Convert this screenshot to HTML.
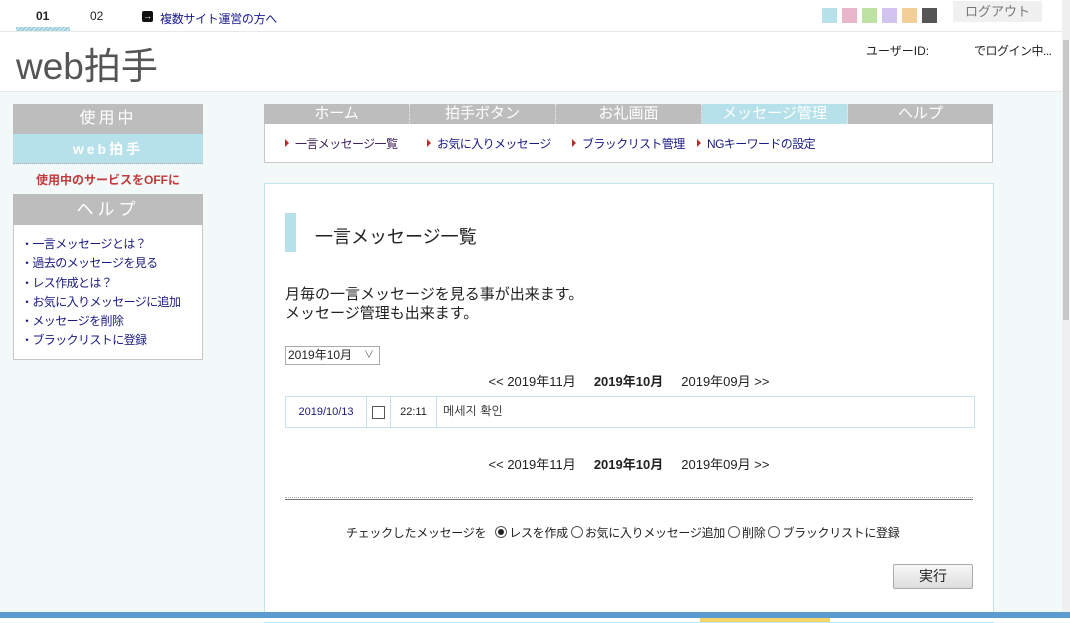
<!DOCTYPE html>
<html><head><meta charset="utf-8"><style>
*{margin:0;padding:0;box-sizing:border-box}
body{width:1070px;height:622px;overflow:hidden;background:#f3f8f8;font-family:"Liberation Sans","Noto Sans CJK JP",sans-serif;font-size:12px;color:#222;position:relative}
.a{position:absolute}
.top{left:0;top:0;width:1062px;height:32px;background:#fff;border-bottom:1px solid #e6eaea}
.head{left:0;top:32px;width:1062px;height:60px;background:#fff;border-bottom:1px solid #e3ecec}
.sq{top:8px;width:15px;height:15px}
.side{left:13px;width:190px}
.gh{background:#bdbdbd;color:#fff;text-align:center}
.nav{left:264px;top:104px;width:729px;height:20px;background:#bdbdbd;display:flex}
.nav div{flex:1;color:#fff;text-align:center;font-size:15px;line-height:20px;border-right:1px dotted #eee}
.sub{left:264px;top:124px;width:729px;height:39px;background:#fff;border:1px solid #c8c8c8;border-top:none}
.sub span{position:absolute;top:11px;font-size:12px;color:#1a1a80;letter-spacing:-0.6px;white-space:nowrap}
.sub span:before{content:"";display:inline-block;border-left:4px solid #b03030;border-top:4px solid transparent;border-bottom:4px solid transparent;margin-right:6px;vertical-align:1px}
.main{left:264px;top:183px;width:730px;height:440px;background:#fff;border:1px solid #c3e4ea}
.mn{left:264px;width:730px;text-align:center;font-size:13px}
.rad{display:inline-block;width:12px;height:12px;border:1px solid #555;border-radius:50%;vertical-align:-1px;margin-right:2px;position:relative}
</style></head><body>
<div class="a top"></div>
<div class="a" style="left:36px;top:9px;font-weight:bold;font-size:12px">01</div>
<div class="a" style="left:16px;top:27px;width:54px;height:4px;background:repeating-linear-gradient(135deg,#9dd0da 0 2px,#d6eef2 2px 3px)"></div>
<div class="a" style="left:90px;top:9px;font-size:12px">02</div>
<div class="a" style="left:142px;top:11px;width:11px;height:11px;background:#111;border-radius:2px;color:#fff;font-size:9px;line-height:11px;text-align:center">→</div>
<div class="a" style="left:160px;top:10px;font-size:12px;color:#1a1a90;letter-spacing:-0.3px">複数サイト運営の方へ</div>
<div class="a sq" style="left:822px;background:#b6e0ea"></div>
<div class="a sq" style="left:842px;background:#e9b5c9"></div>
<div class="a sq" style="left:862px;background:#bde2a2"></div>
<div class="a sq" style="left:882px;background:#d3c4ef"></div>
<div class="a sq" style="left:902px;background:#f2cf97"></div>
<div class="a sq" style="left:922px;background:#555"></div>
<div class="a" style="left:953px;top:1px;width:89px;height:21px;background:#f0f0f0;color:#777;font-size:13px;text-align:center;line-height:21px">ログアウト</div>
<div class="a" style="left:1062px;top:0;width:8px;height:612px;background:#f0f0f0"></div>
<div class="a" style="left:1063px;top:40px;width:6px;height:280px;background:#c8c8c8"></div>
<div class="a head"></div>
<div class="a" style="left:16px;top:45px;font-size:37px;color:#555;line-height:44px">web拍手</div>
<div class="a" style="left:866px;top:42px;font-size:12px">ユーザーID:</div>
<div class="a" style="left:974px;top:42px;font-size:12px;letter-spacing:-0.5px">でログイン中...</div>

<div class="a side gh" style="top:104px;height:30px;font-size:16px;line-height:30px;letter-spacing:3px">使用中</div>
<div class="a side" style="top:134px;height:30px;background:#b6e1ea;color:#fff;font-weight:bold;text-align:center;font-size:14px;line-height:30px;letter-spacing:3px;border-bottom:1px dotted #aaa">web拍手</div>
<div class="a side" style="top:171px;text-align:center;color:#c23a3a;font-weight:bold;font-size:12px">使用中のサービスをOFFに</div>
<div class="a side gh" style="top:194px;height:31px;font-size:17px;line-height:31px;letter-spacing:4px">ヘルプ</div>
<div class="a side" style="top:225px;height:135px;background:#fff;border:1px solid #c8c8c8;border-top:none;padding:10px 0 0 7px;font-size:12px;line-height:19.3px;color:#1a1a80;letter-spacing:-0.6px">・一言メッセージとは？<br>・過去のメッセージを見る<br>・レス作成とは？<br>・お気に入りメッセージに追加<br>・メッセージを削除<br>・ブラックリストに登録</div>

<div class="a nav"><div>ホーム</div><div>拍手ボタン</div><div>お礼画面</div><div style="background:#b6e1ea">メッセージ管理</div><div style="border:none">ヘルプ</div></div>
<div class="a sub"><span style="left:20px;color:#40205a">一言メッセージ一覧</span><span style="left:162px">お気に入りメッセージ</span><span style="left:307px">ブラックリスト管理</span><span style="left:432px">NGキーワードの設定</span></div>

<div class="a main"></div>
<div class="a" style="left:285px;top:213px;width:11px;height:39px;background:#b6e1ea"></div>
<div class="a" style="left:315px;top:223px;font-size:18px">一言メッセージ一覧</div>
<div class="a" style="left:285px;top:285px;font-size:15px;line-height:19px">月毎の一言メッセージを見る事が出来ます。<br>メッセージ管理も出来ます。</div>
<div class="a" style="left:285px;top:346px;width:95px;height:19px;border:1px solid #aaa;background:#fff;font-size:12px;line-height:17px;padding-left:2px">2019年10月 <span style="position:absolute;right:5px;color:#666;font-size:10px">∨</span></div>
<div class="a mn" style="top:371px">&lt;&lt; 2019年11月 &nbsp;&nbsp;&nbsp; <b>2019年10月</b> &nbsp;&nbsp;&nbsp; 2019年09月 &gt;&gt;</div>
<div class="a" style="left:285px;top:396px;width:690px;height:32px;border:1px solid #c3e4ea;font-size:11px">
<div class="a" style="left:0;top:0;width:81px;height:30px;border-right:1px solid #c3e4ea;color:#1a1a80;text-align:center;line-height:30px">2019/10/13</div>
<div class="a" style="left:86px;top:9px;width:13px;height:13px;border:1px solid #555"></div>
<div class="a" style="left:104px;top:0;width:47px;height:30px;border-left:1px solid #c3e4ea;border-right:1px solid #c3e4ea;text-align:center;line-height:30px">22:11</div>
<div class="a" style="left:157px;top:0;line-height:28px;font-size:12px;font-family:'Liberation Sans','NanumGothic',sans-serif">메세지 확인</div>
</div>
<div class="a mn" style="top:454px">&lt;&lt; 2019年11月 &nbsp;&nbsp;&nbsp; <b>2019年10月</b> &nbsp;&nbsp;&nbsp; 2019年09月 &gt;&gt;</div>
<div class="a" style="left:285px;top:497px;width:688px;height:3px;border-top:1px dotted #aaa;border-bottom:1px solid #777"></div>
<div class="a" style="left:346px;top:524px;font-size:12px;letter-spacing:-0.3px">チェックしたメッセージを &nbsp;&nbsp;<span class="rad"><span style="position:absolute;left:2px;top:2px;width:6px;height:6px;background:#222;border-radius:50%"></span></span>レスを作成 <span class="rad"></span>お気に入りメッセージ追加 <span class="rad"></span>削除 <span class="rad"></span>ブラックリストに登録</div>
<div class="a" style="left:893px;top:564px;width:80px;height:25px;border:1px solid #aaa;border-radius:2px;background:linear-gradient(#f8f8f8,#ddd);text-align:center;line-height:23px;font-size:14px">実行</div>
<div class="a" style="left:0;top:612px;width:1070px;height:6px;background:#5c9bd0"></div>
<div class="a" style="left:0;top:618px;width:1070px;height:4px;background:#fff"></div>
<div class="a" style="left:700px;top:618px;width:130px;height:4px;background:#f3d36a"></div>
</body></html>
